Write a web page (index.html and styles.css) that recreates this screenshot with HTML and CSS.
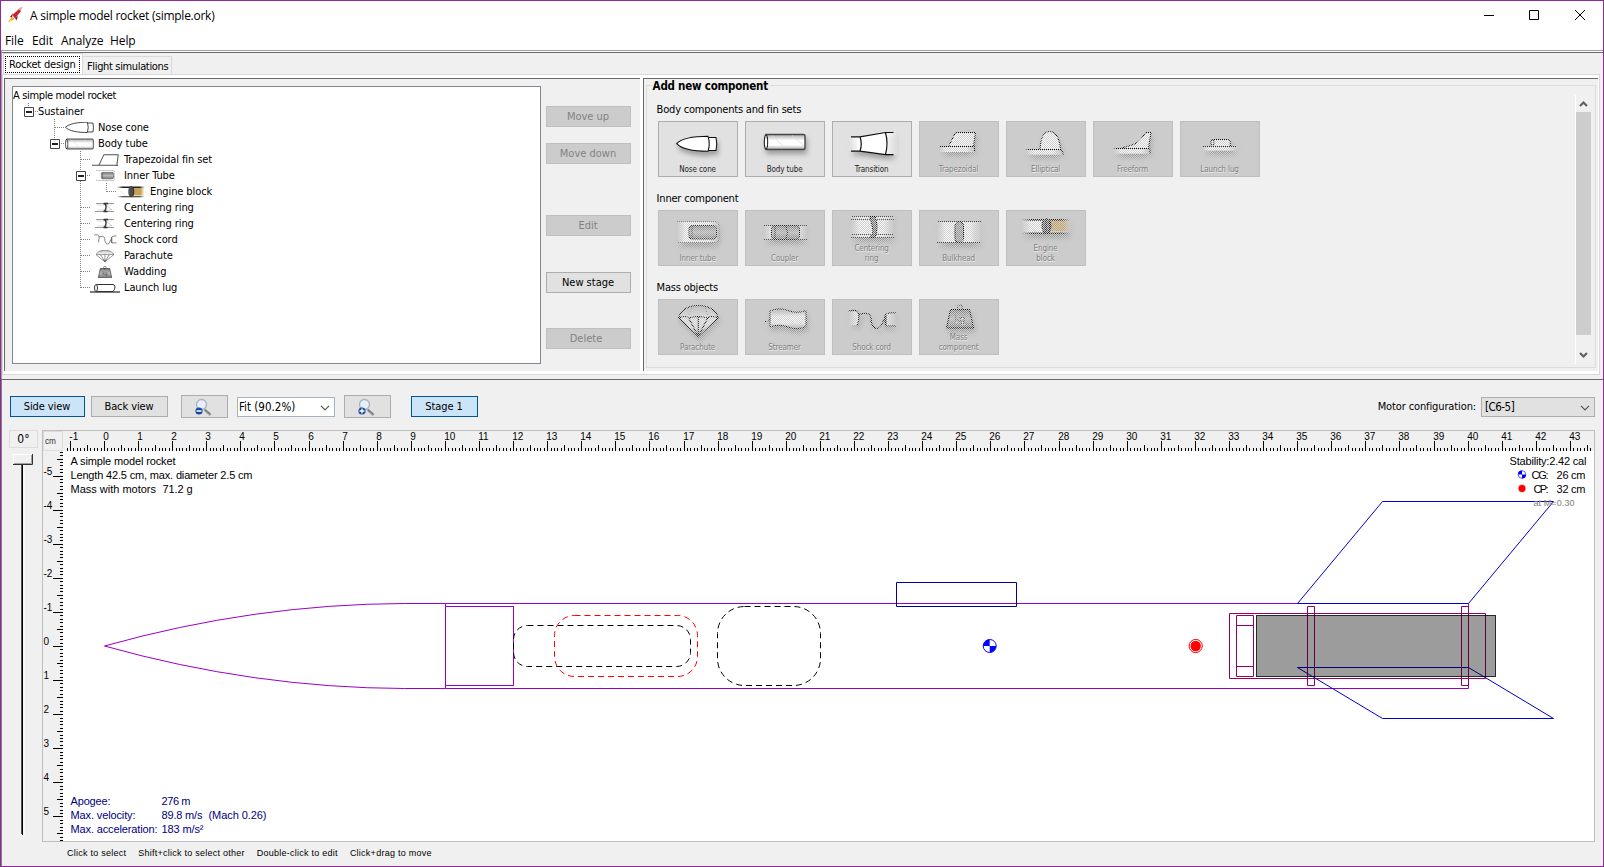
FILE: index.html
```
<!DOCTYPE html>
<html lang="en">
<head>
<meta charset="utf-8">
<title>A simple model rocket (simple.ork)</title>
<link rel="stylesheet" href="styles.css">
</head>
<body>
<svg class="defs" width="0" height="0">
  <defs>
    <pattern id="checker" width="2" height="2" patternUnits="userSpaceOnUse"><path d="M0 0h1v1h-1zM1 1h1v1h-1z" fill="#fff" shape-rendering="crispEdges"/></pattern>
    <mask id="dither" maskUnits="userSpaceOnUse" x="0" y="0" width="80" height="56"><rect width="80" height="56" fill="url(#checker)"/></mask>
    <linearGradient id="fade"><stop offset="0" stop-color="#fff" stop-opacity="0"/><stop offset=".2" stop-color="#fff"/><stop offset=".75" stop-color="#fff"/><stop offset="1" stop-color="#fff" stop-opacity="0"/></linearGradient>
    <linearGradient id="edge"><stop offset="0" stop-color="#222" stop-opacity="0"/><stop offset=".2" stop-color="#222"/><stop offset=".8" stop-color="#222"/><stop offset="1" stop-color="#222" stop-opacity="0"/></linearGradient>
    <linearGradient id="metal" x2="0" y2="1"><stop offset="0" stop-color="#aaa"/><stop offset=".4" stop-color="#fff"/><stop offset=".7" stop-color="#fff"/><stop offset="1" stop-color="#aaa"/></linearGradient>
    <linearGradient id="grey" x2="0" y2="1"><stop offset="0" stop-color="#777"/><stop offset=".5" stop-color="#bbb"/><stop offset="1" stop-color="#777"/></linearGradient>
    <linearGradient id="tan"><stop offset="0" stop-color="#c9a25a"/><stop offset=".7" stop-color="#c9a25a"/><stop offset="1" stop-color="#c9a25a" stop-opacity="0"/></linearGradient>
    <filter id="shadow" x="-30%" y="-30%" width="170%" height="190%"><feDropShadow dx="1.5" dy="4" stdDeviation="2.6" flood-color="#000" flood-opacity=".3"/></filter>
    <g id="i-nose" fill="#fff" stroke="#111" stroke-width="1.1"><path d="M50.500 16.500h7.500q1.500 6.500 0 13h-7.500"/><path d="M18.700 22.700C24 17 38 15.300 50 15.300q2.500 7.500 0 15C38 30.300 24 28.500 18.700 22.700z"/></g>
    <g id="i-tube" fill="url(#metal)" stroke="#111"><path d="M21 13.500h37.500q1.500 0 1.500 1.500v12q0 1.500-1.500 1.500H21z" stroke="#444" stroke-width="1.400"/><ellipse cx="21" cy="21" rx="1.700" ry="7.500"/><path d="M27 14.500l13 12M47 14.500l12 10" stroke="#ddd" stroke-width=".8"/></g>
    <g id="i-trans"><path d="M17 16h11l26-4.500h11v22H54L28 30H17z" fill="url(#fade)"/><path d="M19 15.800h9L53.500 11.500h8M19 30.200h9l25.500 3.500h8M28 15.800q2.500 7 0 14.400M53.500 11.500q3 11 0 22" fill="none" stroke="#111" stroke-width="1.200"/></g>
    <g id="i-trap"><path d="M20 26h36v5H20z" fill="url(#fade)"/><path d="M29.500 25.500L36.500 11.500H56.500L54.500 25.500" fill="#fff" stroke="#111"/><path d="M20 25.500h35.500v5" fill="none" stroke="#111"/></g>
    <g id="i-ellip"><path d="M20 28.500h36v5H20z" fill="url(#fade)"/><path d="M34 28C35 14 39 10.500 43.500 10.500S53 14 54.500 28" fill="#fff" stroke="#111"/><path d="M20.500 28.500h35l2 5" fill="none" stroke="#111"/></g>
    <g id="i-free"><path d="M21 27.500h36v5H21z" fill="url(#fade)"/><path d="M28.500 27C44 23 46 22 52.500 11.500H58L55.500 27" fill="#fff" stroke="#111"/><path d="M21.500 27.500h35.500v5" fill="none" stroke="#111"/></g>
    <g id="i-lug"><path d="M22 25.500h35v4H22z" fill="url(#fade)"/><path d="M32 25V18.500h16.500q1.800 0 1.800 2V25" fill="#fff" stroke="#111"/><ellipse cx="32.500" cy="21.800" rx="1.500" ry="3.500" fill="#fff" stroke="#111"/><path d="M22 25.500h35" stroke="#333"/></g>
    <g id="i-inner"><path d="M19 11.500h38q4 0 4 4v13q0 4-4 4H19z" fill="url(#fade)"/><path d="M19 11.500h38q4 0 4 4v13q0 4-4 4H19" fill="none" stroke="#888"/><rect x="31" y="15.500" width="27.500" height="13.500" rx="3" fill="url(#grey)" stroke="#333"/><path d="M34 16v13" stroke="#444"/></g>
    <g id="i-coupler"><path d="M19 15.500h43v14H19z" fill="url(#fade)"/><path d="M19 15.500h43M19 29.500h43" stroke="#555"/><rect x="26.500" y="15.500" width="28" height="14" rx="3" fill="url(#grey)" stroke="#222"/><path d="M41 16q3 7 0 13M30 16v13" fill="none" stroke="#222"/></g>
    <g id="i-ring"><path d="M19 6.500h43v21H19z" fill="url(#fade)"/><path d="M19 6.500h43M19 9.500h43M19 24.500h43M19 27.500h43" stroke="#333" stroke-width=".8"/><path d="M38 6.500h5q4 10 0 21h-5q4-3 2.500-10T38 6.500z" fill="#777" stroke="#111"/></g>
    <g id="i-bulk"><path d="M18 11.500h44v21H18z" fill="url(#fade)"/><path d="M18 11.500h44M18 32.500h44" stroke="#444"/><path d="M46 17l12 12" stroke="#bbb"/><rect x="36" y="11.500" width="8.500" height="21" rx="4.200" fill="#999" stroke="#111"/></g>
    <g id="i-engine"><path d="M15 8h50v16H15z" fill="url(#fade)"/><path d="M42 10.500h22v11H42z" fill="url(#tan)"/><path d="M15 8.700h50v2H15zM15 22.500h50v1.500H15z" fill="url(#edge)"/><path d="M18 12l12 10" stroke="#ddd"/><ellipse cx="40.500" cy="16" rx="4.500" ry="7.300" fill="#666" stroke="#111"/><path d="M40 10v12M43 11q2 5 0 10" fill="none" stroke="#111"/></g>
    <g id="i-chute" fill="none" stroke="#222" stroke-width="1.100"><path d="M20.700 19C22 11 31 6.500 40.300 6.500S59 11 60 19L40.300 37.500z" fill="url(#metal)" fill-opacity=".7"/><path d="M20.700 19q7-3 10 0q9-3 19 0q3-3 10.600 0M30.700 19l9.600 18.500 9.400-18.500M40.300 18v19"/><path d="M30.700 19Q31 10 36 7M49.700 19Q49 10 45 7" stroke="#888" stroke-dasharray="1 2"/></g>
    <g id="i-stream"><path d="M25 12q9-4 18-.5t18 0v16q-9 4-18 .5t-18 0z" fill="url(#metal)" stroke="#222"/><path d="M19 22.500h3l3-3" fill="none" stroke="#333"/></g>
    <g id="i-cord" fill="none" stroke="#222" stroke-width="1.100"><path d="M16.500 12h10v14h-10zM54 14h10v14H54z" fill="url(#fade)" stroke="none"/><path d="M16.500 12q9-2 10 2t-1 12M27 15.500q9-3 11 1t1 6q2 7 6 7 5-1 6.500-9M64 14q-10-1-11 3t1 10h10M54 16v11"/></g>
    <g id="i-mass"><path d="M31.500 10.500h19l4 18.500h-27z" fill="url(#grey)" stroke="#111"/><circle cx="40.700" cy="8.500" r="2.500" fill="none" stroke="#222"/><text x="41" y="23" text-anchor="middle" class="kg">kg</text></g>
    <g id="i-lens"><path d="M10.500 11.500l6 5.500" stroke="#999" stroke-width="2.400"/><path d="M11 12l5.500 4" stroke="#666" stroke-width=".8"/><circle cx="7.500" cy="6.500" r="5" fill="#e6f0fa" stroke="#a9b3bd" stroke-width="1.300"/><circle cx="5" cy="13" r="3.600" fill="#174a9c"/></g>
  </defs>
</svg>

<div class="window">
  <header class="titlebar">
    <svg class="appicon" width="16" height="16" viewBox="0 0 16 16"><path d="M15 0L12 0.500 5 7l3 3z" fill="#e9a9a0"/><path d="M11 2.500L4.500 8 7 11.500 13 4z" fill="#c8202a"/><path d="M5 6L2 10l2 .5zM10 9l-1.500 4.500L7 11z" fill="#8d1515"/><path d="M3.500 10L0 15.500 5.500 13 6 11z" fill="#f6a81c"/><path d="M3 12L1 15l3-1.500z" fill="#ffe23c"/></svg>
    <span class="caption">A simple model rocket (simple.ork)</span>
    <svg class="winctl" width="114" height="12" viewBox="0 0 114 12"><path d="M0 6.500h10M45.500 1.500h9v9h-9zM91 1l10 10M101 1l-10 10" fill="none" stroke="#000"/></svg>
  </header>
  <nav class="menubar"><span class="m-file">File</span><span class="m-edit">Edit</span><span class="m-analyze">Analyze</span><span>Help</span></nav>

  <section class="upper">
    <div class="tabs"><span class="tab tab-on"><span class="focus">Rocket design</span></span><span class="tab">Flight simulations</span></div>
    <div class="pane">
      <div class="panel design">
        <div class="tree">
          <svg class="lines" width="200" height="210" viewBox="13 87 200 210">
            <path class="dots" d="M28.500 103v4M35 111.500h4M54.500 119v20M55 127.500h10M61 143.500h4M80.500 151v20M80.500 181v107M81 159.500h9M87 175.500h4M106.500 183v9M107 191.500h9M81 207.500h9M81 223.500h9M81 239.500h9M81 255.500h9M81 271.500h9M81 287.500h9"/>
            <path class="knob" d="M24.500 107.500h9v9h-9zM50.500 139.500h9v9h-9zM76.500 171.500h9v9h-9z"/>
            <path class="minus" d="M26 112h6M52 144h6M78 176h6"/>
          </svg>
          <div class="node root">A simple model rocket</div>
          <div class="node stage">Sustainer</div>
          <div class="node l2"><i><svg width="29" height="11" viewBox="18 15 41.500 16" preserveAspectRatio="none"><use href="#i-nose"/></svg></i>Nose cone</div>
          <div class="node l2"><i><svg width="29" height="12" viewBox="18.500 12 42.500 18" preserveAspectRatio="none"><use href="#i-tube"/></svg></i>Body tube</div>
          <div class="node l3"><i><svg width="27" height="12" viewBox="20 10.500 37.500 16" preserveAspectRatio="none"><use href="#i-trap"/></svg></i>Trapezoidal fin set</div>
          <div class="node l3"><i><svg width="19" height="11" viewBox="19 10.500 43 23" preserveAspectRatio="none"><use href="#i-inner"/></svg></i>Inner Tube</div>
          <div class="node l4"><i><svg width="28" height="12" viewBox="15 8 50 17" preserveAspectRatio="none"><use href="#i-engine"/></svg></i>Engine block</div>
          <div class="node l3"><i><svg width="20" height="11" viewBox="0 0 20 11"><path d="M1 1.500h18M0 9.500h19" stroke="#999"/><path d="M2 3h15M2 8h15" stroke="#ddd"/><path d="M8.500 1.500q3 .5 2.500 4t-2.500 4h4M9 1.500h4" fill="none" stroke="#333" stroke-width="1.400"/><path d="M12 4l5 4" stroke="#ccc"/></svg></i>Centering ring</div>
          <div class="node l3"><i><svg width="20" height="11" viewBox="0 0 20 11"><path d="M1 1.500h18M0 9.500h19" stroke="#999"/><path d="M2 3h15M2 8h15" stroke="#ddd"/><path d="M8.500 1.500q3 .5 2.500 4t-2.500 4h4M9 1.500h4" fill="none" stroke="#333" stroke-width="1.400"/><path d="M12 4l5 4" stroke="#ccc"/></svg></i>Centering ring</div>
          <div class="node l3"><i><svg width="23" height="11" viewBox="16 10 49 21" preserveAspectRatio="none"><use href="#i-cord"/></svg></i>Shock cord</div>
          <div class="node l3"><i><svg width="18" height="12" viewBox="20 6 41 32" preserveAspectRatio="none"><use href="#i-chute"/></svg></i>Parachute</div>
          <div class="node l3"><i><svg width="14" height="12" viewBox="27 5.500 28 24" preserveAspectRatio="none"><use href="#i-mass"/></svg></i>Wadding</div>
          <div class="node l3"><i><svg width="30" height="10" viewBox="0 0 30 10"><path d="M6 1.500h17q2 0 2 2.500t-2 4.500H6" fill="#fff" stroke="#333"/><ellipse cx="6" cy="5" rx="1.500" ry="3.500" fill="#fff" stroke="#333"/><path d="M0 9h30" stroke="#333" stroke-width="1.300"/></svg></i>Launch lug</div>
        </div>
        <div class="actions">
          <button class="btn off">Move up</button>
          <button class="btn off down">Move down</button>
          <button class="btn off edit">Edit</button>
          <button class="btn new">New stage</button>
          <button class="btn off del">Delete</button>
        </div>
      </div>
      <div class="panel library">
        <div class="group">
          <div class="legend">Add new component</div>
          <div class="shelves">
            <h3>Body components and fin sets</h3>
            <div class="shelf">
              <button class="part"><svg width="80" height="56"><use href="#i-nose" filter="url(#shadow)"/></svg><span>Nose cone</span></button>
              <button class="part"><svg width="80" height="56"><use href="#i-tube" filter="url(#shadow)"/></svg><span>Body tube</span></button>
              <button class="part"><svg width="80" height="56"><use href="#i-trans" filter="url(#shadow)"/></svg><span>Transition</span></button>
              <button class="part off"><svg width="80" height="56"><g mask="url(#dither)"><use href="#i-trap" filter="url(#shadow)"/></g></svg><span>Trapezoidal</span></button>
              <button class="part off"><svg width="80" height="56"><g mask="url(#dither)"><use href="#i-ellip" filter="url(#shadow)"/></g></svg><span>Elliptical</span></button>
              <button class="part off"><svg width="80" height="56"><g mask="url(#dither)"><use href="#i-free" filter="url(#shadow)"/></g></svg><span>Freeform</span></button>
              <button class="part off"><svg width="80" height="56"><g mask="url(#dither)"><use href="#i-lug" filter="url(#shadow)"/></g></svg><span>Launch lug</span></button>
            </div>
            <h3>Inner component</h3>
            <div class="shelf">
              <button class="part off"><svg width="80" height="56"><g mask="url(#dither)"><use href="#i-inner" filter="url(#shadow)"/></g></svg><span>Inner tube</span></button>
              <button class="part off"><svg width="80" height="56"><g mask="url(#dither)"><use href="#i-coupler" filter="url(#shadow)"/></g></svg><span>Coupler</span></button>
              <button class="part off"><svg width="80" height="56"><g mask="url(#dither)"><use href="#i-ring" filter="url(#shadow)"/></g></svg><span>Centering<br>ring</span></button>
              <button class="part off"><svg width="80" height="56"><g mask="url(#dither)"><use href="#i-bulk" filter="url(#shadow)"/></g></svg><span>Bulkhead</span></button>
              <button class="part off"><svg width="80" height="56"><g mask="url(#dither)"><use href="#i-engine" filter="url(#shadow)"/></g></svg><span>Engine<br>block</span></button>
            </div>
            <h3>Mass objects</h3>
            <div class="shelf">
              <button class="part off"><svg width="80" height="56"><g mask="url(#dither)"><use href="#i-chute" filter="url(#shadow)"/></g></svg><span>Parachute</span></button>
              <button class="part off"><svg width="80" height="56"><g mask="url(#dither)"><use href="#i-stream" filter="url(#shadow)"/></g></svg><span>Streamer</span></button>
              <button class="part off"><svg width="80" height="56"><g mask="url(#dither)"><use href="#i-cord" filter="url(#shadow)"/></g></svg><span>Shock cord</span></button>
              <button class="part off"><svg width="80" height="56"><g mask="url(#dither)"><use href="#i-mass" filter="url(#shadow)"/></g></svg><span>Mass<br>component</span></button>
            </div>
          </div>
          <div class="scroll">
            <svg width="15" height="17"><path d="M4 11l3.500-3.500L11 11" class="arrow"/></svg>
            <div class="thumb"></div>
            <svg width="15" height="17"><path d="M4 6l3.500 3.500L11 6" class="arrow"/></svg>
          </div>
        </div>
      </div>
    </div>
  </section>

  <section class="lower">
    <div class="toolbar">
      <button class="btn on side">Side view</button>
      <button class="btn back">Back view</button>
      <button class="btn zoom zout"><svg width="18" height="18"><use href="#i-lens"/><path d="M2.500 13h5" stroke="#fff" stroke-width="1.500"/></svg></button>
      <div class="combo fit"><span>Fit (90.2%)</span><svg width="10" height="6"><path d="M1 .8l4 4 4-4" class="chev"/></svg></div>
      <button class="btn zoom zin"><svg width="18" height="18"><use href="#i-lens"/><path d="M2.500 13h5M5 10.500v5" stroke="#fff" stroke-width="1.300"/></svg></button>
      <button class="btn on stagebtn">Stage 1</button>
      <span class="mlabel">Motor configuration:</span>
      <div class="combo motor"><span>[C6-5]</span><svg width="10" height="6"><path d="M1 .8l4 4 4-4" class="chev"/></svg></div>
    </div>
    <div class="work">
      <div class="rotate">
        <div class="angle">0°</div>
        <svg width="20" height="382"><path d="M9.500 10v371" stroke="#000" stroke-width="1"/><path d="M8.500 10v370" stroke="#555"/><path d="M11 10v372" stroke="#fff"/><rect width="20" height="11" fill="#f0f0f0"/><path d="M.5 11V.5H19" fill="none" stroke="#fff"/><path d="M0 10.500h19.500V0" fill="none" stroke="#333"/><path d="M1 9.500h17.500V1" fill="none" stroke="#a0a0a0"/></svg>
      </div>
      <svg class="canvas" width="1553" height="412" viewBox="42 430 1553 412">
        <rect x="42" y="430" width="1553" height="412" fill="#f0f0f0"/>
        <rect x="63" y="451" width="1531" height="390" fill="#fff"/>
        <rect x="42.500" y="430.500" width="1552" height="411" fill="none" stroke="#bebebe"/>
        <rect x="43.500" y="431.500" width="19" height="19" fill="none" stroke="#dcdcdc"/>
        <text x="45" y="444" textLength="11" lengthAdjust="spacingAndGlyphs" class="unit">cm</text>
        <path id="ticks" stroke="#000" shape-rendering="crispEdges"/>
        <g id="marks" class="num"></g>

        <g fill="none" stroke="#9900cc">
          <path d="M445.500 603.500H1468.500V688.500H445.500z"/>
          <path d="M445.500 603.500h-41Q254 604 104.500 646Q254 688 404.500 688.500h41"/>
          <rect x="445.500" y="606.500" width="68" height="79"/>
        </g>
        <g fill="none" stroke="#000" stroke-dasharray="6 4">
          <rect x="513.500" y="625.500" width="177" height="41" rx="14"/>
          <rect x="554.500" y="615.500" width="143" height="61" rx="20" stroke="#f00"/>
          <rect x="717.500" y="606.500" width="103" height="79" rx="27"/>
        </g>
        <g fill="none" stroke="#990066">
          <path d="M1229.500 613.500h256v65h-256zM1236.500 615.500h17v61h-17zM1236.500 625.500h17M1236.500 666.500h17M1307.500 606.500h7v79h-7zM1461.500 606.500h7v79h-7z"/>
        </g>
        <g fill="none" stroke="#0000cc">
          <path d="M896.500 582.500h120v24h-120z" stroke="#000099"/>
          <path d="M1297.500 603.500L1382.500 501.500H1553.500L1468.500 603.500zM1297.500 667.500L1382.500 718.500H1553.500L1468.500 667.500z"/>
        </g>
        <rect x="1256.500" y="615.500" width="239" height="61" fill="#000" fill-opacity=".39" stroke="#000" stroke-opacity=".8"/>
        <g id="cg"><circle cx="989.700" cy="646" r="6.500" fill="#fff" stroke="#00f"/><path d="M989.700 646v-6.500a6.500 6.500 0 0 0-6.500 6.500zM989.700 646v6.500a6.500 6.500 0 0 0 6.500-6.500z" fill="#00f"/></g>
        <g id="cp"><circle cx="1195.700" cy="646" r="6.600" fill="#fff" stroke="#f00"/><circle cx="1195.700" cy="646" r="5.200" fill="#f00"/></g>

        <g class="info">
          <text x="70.500" y="465" textLength="105">A simple model rocket</text>
          <text x="70.500" y="479" textLength="182">Length 42.5 cm, max. diameter 2.5 cm</text>
          <text x="70.500" y="493" textLength="85.500">Mass with motors</text><text x="162.500" y="493" textLength="30">71.2 g</text>
          <text x="1509.500" y="465" textLength="77">Stability:2.42 cal</text>
          <text x="1531.500" y="479" textLength="17">CG:</text><text x="1556.500" y="479" textLength="29">26 cm</text>
          <text x="1533.500" y="493" textLength="15">CP:</text><text x="1556.500" y="493" textLength="29">32 cm</text>
          <text x="1533.500" y="506" textLength="41" class="mach">at M=0.30</text>
        </g>
        <g class="info flight">
          <text x="70.500" y="805" textLength="40">Apogee:</text><text x="161.500" y="805" textLength="29">276 m</text>
          <text x="70.500" y="819" textLength="65">Max. velocity:</text><text x="161.500" y="819" textLength="41">89.8 m/s</text><text x="208.500" y="819" textLength="58">(Mach 0.26)</text>
          <text x="70.500" y="833" textLength="87">Max. acceleration:</text><text x="161.500" y="833" textLength="42">183 m/s²</text>
        </g>
        <circle cx="1522" cy="474.500" r="3.800" fill="#fff" stroke="#00f" stroke-opacity=".6"/><path d="M1522 474.500v-4a4 4 0 0 0-4 4zM1522 474.500v4a4 4 0 0 0 4-4z" fill="#00f"/>
        <circle cx="1522" cy="488.500" r="4.200" fill="#fbb"/><circle cx="1522" cy="488.500" r="3.400" fill="#f00"/>
      </svg>
    </div>
    <footer class="hints"><span>Click to select</span><span>Shift+click to select other</span><span>Double-click to edit</span><span>Click+drag to move</span></footer>
  </section>
</div>
<script src="rulers.js"></script>
</body>
</html>
```

FILE: styles.css
```
* { box-sizing: border-box; }
body { margin: 0; background: #f0f0f0; font-family: "DejaVu Sans Condensed", "DejaVu Sans", sans-serif; font-stretch: condensed; font-size: 11px; color: #000; }
.defs { position: absolute; }
.window { width: 1604px; height: 867px; border: 1px solid #902a9b; display: flex; flex-direction: column; background: #f0f0f0; overflow: hidden; }

.titlebar { height: 29px; background: #fff; display: flex; align-items: center; padding: 0 0 0 8px; font-family: "Open Sans", "Noto Sans", sans-serif; font-stretch: normal; font-size: 12px; }
.appicon { margin: 0 5px 1px -1px; }
.caption { letter-spacing: -.26px; padding-left: 1px; }
.winctl { margin: 0 5px 1px auto; }
.menubar { height: 20px; background: #fff; display: flex; padding-left: 4px; line-height: 21px; font-family: "Open Sans", "Noto Sans", sans-serif; font-stretch: normal; font-size: 12px; letter-spacing: -.1px; }
.m-file { width: 27px; }
.m-edit { width: 29px; }
.m-analyze { width: 49px; }

.upper { height: 329px; border-top: 1px solid #a0a0a0; border-left: 1px solid #a0a0a0; }
.tabs { margin-top: 1px; height: 22px; border-top: 1px solid #696969; box-shadow: 0 -1px #fff; display: flex; align-items: flex-end; padding-left: 1px; }
.tab { height: 18px; width: 89px; border: 1px solid #d9d9d9; border-bottom: 0; border-left: 0; padding-left: 4px; line-height: 20px; white-space: nowrap; letter-spacing: -.35px; }
.tab-on { width: 80px; height: 21px; background: #fff; border-left: 1px solid #d9d9d9; padding: 2px 1px; letter-spacing: -.2px; }
.focus { display: block; width: 75px; height: 17px; border: 1px dotted #000; line-height: 15px; padding-left: 3px; }
.pane { height: 301px; width: 1598px; border: 1px solid #d9d9d9; background: #fff; padding: 3px 1px 2px 1px; display: flex; gap: 3px; }
.panel { background: #f0f0f0; border: solid #696969; border-width: 1px 0 0 1px; height: 293px; }
.design { width: 636px; display: flex; padding: 7px 0 0 7px; }
.tree { position: relative; width: 529px; height: 278px; background: #fff; border: 1px solid #828790; }
.lines { position: absolute; left: 0; top: 0; }
.dots { fill: none; stroke: #808080; stroke-dasharray: 1 1; }
.knob { fill: #fff; stroke: #444; }
.minus { stroke: #222; stroke-width: 2; }
.node { height: 16px; line-height: 16px; padding-top: 1px; display: flex; align-items: center; white-space: nowrap; letter-spacing: -.1px; position: relative; }
.node i { width: 30px; margin-right: 3px; display: flex; justify-content: center; }
.node i svg { margin-left: -2px; }
.root { letter-spacing: -.35px; }
.stage { padding-left: 25px; }
.l2 { padding-left: 52px; }
.l3 { padding-left: 78px; }
.l4 { padding-left: 104px; }
.actions { padding: 20px 0 0 5px; display: flex; flex-direction: column; }
.btn { font: inherit; width: 85px; height: 21px; padding: 0 1px 1px 0; border: 1px solid #adadad; background: #e1e1e1; color: #000; display: flex; align-items: center; justify-content: center; white-space: nowrap; }
.btn.off { background: #ccc; border-color: #bfbfbf; color: #838383; }
.down { margin-top: 16px; }
.edit { margin-top: 51px; }
.new { margin-top: 36px; }
.actions .del { margin-top: 35px; padding-right: 5px; }

.library { width: 956px; padding: 6px 0 0 2px; }
.group { position: relative; width: 950px; height: 283px; border: 1px solid #dcdcdc; display: flex; justify-content: space-between; }
.legend { position: absolute; left: 5px; top: -7px; padding: 0 2px 0 1px; background: #f0f0f0; font-weight: bold; font-size: 11.500px; line-height: 14px; letter-spacing: -.23px; white-space: nowrap; }
.shelves { padding-left: 10px; }
.shelves h3 { margin: 0; font-weight: normal; font-size: 11px; line-height: 20px; height: 33px; padding-top: 12px; letter-spacing: -.2px; }
.shelves h3:first-child { padding-top: 14px; height: 35px; }
.shelf { display: flex; gap: 7px; padding-left: 1px; }
.part { font: inherit; font-size: 8px; line-height: 10px; width: 80px; height: 56px; padding: 0 0 1px; border: 1px solid #adadad; background: #e1e1e1; color: #222; display: flex; align-items: flex-end; justify-content: center; position: relative; letter-spacing: -.1px; }
.part.off { background: #ccc; border-color: #bfbfbf; color: #808080; text-shadow: .5px .5px #ececec; }
.part svg { position: absolute; left: -1px; top: -1px; }
.part span { position: relative; }
.kg { font: 9px "DejaVu Sans", sans-serif; fill: #444; }
.scroll { width: 16px; height: 269px; margin: 9px 4px 0 0; border-left: 1px solid #fff; display: flex; flex-direction: column; }
.thumb { height: 224px; background: #cdcdcd; }
.scroll svg { display: block; }
.scroll svg:last-child { margin-top: 12px; }
.arrow { fill: none; stroke: #606060; stroke-width: 2.200; }

.lower { flex: 1; border-top: 1px solid #696969; border-left: 1px solid #808080; }
.toolbar { height: 50px; padding: 15px 8px 0 8px; display: flex; align-items: flex-start; letter-spacing: -.1px; }
.toolbar .btn { margin-top: 1px; letter-spacing: -.1px; }
.btn.on { background: #cce4f7; border-color: #005499; }
.toolbar .side { width: 75px; }
.toolbar .back { width: 77px; margin-left: 6px; }
.toolbar .zoom { width: 47px; height: 23px; padding: 0 4px 0 0; margin-top: 0; }
.toolbar .zout { margin-left: 13px; }
.combo { height: 20px; margin-top: 2px; border: 1px solid #adadad; background: #e1e1e1; display: flex; align-items: center; justify-content: space-between; padding: 0 4px 1px 3px; font-size: 11.500px; }
.combo svg { margin-top: 3px; }
.fit { width: 98px; margin-left: 9px; background: #fff; border-color: #a8b2bd; padding-left: 1px; letter-spacing: 0; }
.chev { fill: none; stroke: #555; stroke-width: 1.200; }
.toolbar .zin { margin-left: 9px; }
.toolbar .stagebtn { width: 67px; margin-left: 20px; }
.mlabel { margin-left: auto; margin-right: 5px; line-height: 24px; letter-spacing: -.12px; }
.motor { width: 114px; letter-spacing: -.5px; }
.work { display: flex; height: 412px; }
.rotate { width: 40px; padding-left: 7px; }
.angle { width: 29px; height: 18px; border: 1px solid #dcdcdc; text-align: center; line-height: 17px; margin-bottom: 6px; font-size: 12px; }
.rotate svg { display: block; margin-left: 4px; }
.canvas { display: block; font-family: "Liberation Sans", Arial, sans-serif; }
.unit { font-size: 8.500px; fill: #333; }
.num { font-size: 10px; }
.info { font-size: 11px; }
.mach { font-size: 9px; fill: #808080; }
.flight { fill: #000080; }
.hints { display: flex; gap: 12px; padding-left: 65px; font-family: "Liberation Sans", Arial, sans-serif; font-size: 9px; letter-spacing: .25px; line-height: 22px; }
```

FILE: rulers.js
```
// Ruler ticks every millimetre, with a number at each whole centimetre.
const SCALE = 34.09, X0 = 104.5, Y0 = 646.5;
let path = '', marks = '';
for (let mm = -12; mm <= 436; mm++) {
  const x = Math.floor(X0 + mm * SCALE / 10) + 0.5;
  if (x < 64 || x > 1593) continue;
  const len = mm % 10 === 0 ? 10 : mm % 5 === 0 ? 6 : 3;
  path += `M${x} 451v-${len}`;
  if (mm % 10 === 0) marks += `<text x="${x - 1.2}" y="440">${mm / 10}</text>`;
}
for (let mm = -57; mm <= 57; mm++) {
  const y = Math.floor(Y0 + mm * SCALE / 10) + 0.5;
  if (y < 452 || y > 841) continue;
  const len = mm % 10 === 0 ? 10 : mm % 5 === 0 ? 6 : 3;
  path += `M63 ${y}h-${len}`;
  if (mm % 10 === 0) marks += `<text x="43.500" y="${y - 1.5}">${mm / 10}</text>`;
}
document.getElementById('ticks').setAttribute('d', path);
document.getElementById('marks').innerHTML = marks;
```
